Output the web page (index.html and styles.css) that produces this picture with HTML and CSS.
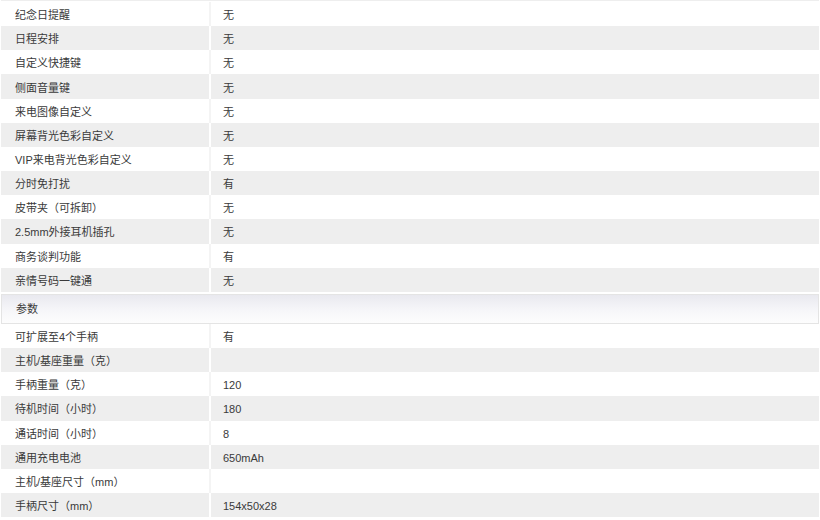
FILE: index.html
```html
<!DOCTYPE html>
<html lang="zh-CN">
<head>
<meta charset="utf-8">
<title>参数</title>
<link rel="stylesheet" href="styles.css">
</head>
<body>
<div class="wrap">
  <div class="cut"></div>
  <table class="spec">
    <tbody>
      <tr class="w"><td class="k">纪念日提醒</td><td class="v">无</td></tr>
      <tr class="g"><td class="k">日程安排</td><td class="v">无</td></tr>
      <tr class="w"><td class="k">自定义快捷键</td><td class="v">无</td></tr>
      <tr class="g"><td class="k">侧面音量键</td><td class="v">无</td></tr>
      <tr class="w"><td class="k">来电图像自定义</td><td class="v">无</td></tr>
      <tr class="g"><td class="k">屏幕背光色彩自定义</td><td class="v">无</td></tr>
      <tr class="w"><td class="k">VIP来电背光色彩自定义</td><td class="v">无</td></tr>
      <tr class="g"><td class="k">分时免打扰</td><td class="v">有</td></tr>
      <tr class="w"><td class="k">皮带夹（可拆卸）</td><td class="v">无</td></tr>
      <tr class="g"><td class="k">2.5mm外接耳机插孔</td><td class="v">无</td></tr>
      <tr class="w"><td class="k">商务谈判功能</td><td class="v">有</td></tr>
      <tr class="g"><td class="k">亲情号码一键通</td><td class="v">无</td></tr>
    </tbody>
  </table>
  <div class="head">参数</div>
  <table class="spec">
    <tbody>
      <tr class="w"><td class="k">可扩展至4个手柄</td><td class="v">有</td></tr>
      <tr class="g"><td class="k">主机/基座重量（克）</td><td class="v"></td></tr>
      <tr class="w"><td class="k">手柄重量（克）</td><td class="v">120</td></tr>
      <tr class="g"><td class="k">待机时间（小时）</td><td class="v">180</td></tr>
      <tr class="w"><td class="k">通话时间（小时）</td><td class="v">8</td></tr>
      <tr class="g"><td class="k">通用充电电池</td><td class="v">650mAh</td></tr>
      <tr class="w"><td class="k">主机/基座尺寸（mm）</td><td class="v"></td></tr>
      <tr class="g"><td class="k">手柄尺寸（mm）</td><td class="v">154x50x28</td></tr>
    </tbody>
  </table>
</div>
</body>
</html>
```

FILE: styles.css
```css
html, body {
  margin: 0;
  padding: 0;
  background: #fff;
}

body {
  font-family: "Liberation Sans", Arial, "Noto Sans CJK SC", sans-serif;
  font-size: 11px;
  color: #3a3a3a;
}

.wrap {
  width: 818px;
  margin-left: 1px;
  display: flex;
  flex-direction: column;
}

.cut {
  height: 1px;
  background: #eeeeee;
  margin-bottom: 1px;
}

.spec {
  width: 818px;
  border-collapse: collapse;
  table-layout: fixed;
}

.spec td {
  height: 24.17px;
  padding: 2px 0 0 0;
  box-sizing: border-box;
  line-height: 16px;
  vertical-align: middle;
  white-space: nowrap;
}

.spec td.k {
  width: 209px;
  padding-left: 14px;
  border-right: 2px solid #fff;
}

.spec td.v {
  padding-left: 12px;
}

.spec tr.g td {
  background: #eeeeee;
}

.spec tr.w td.k {
  border-right-color: #f4f4f4;
}

.head {
  margin-top: 2px;
  height: 28px;
  line-height: 28px;
  padding-left: 14px;
  border: 1px solid #e4e4e4;
  background: linear-gradient(to bottom, #e9e9ef 0%, #f6f6f9 55%, #fdfdfd 100%);
}
```
